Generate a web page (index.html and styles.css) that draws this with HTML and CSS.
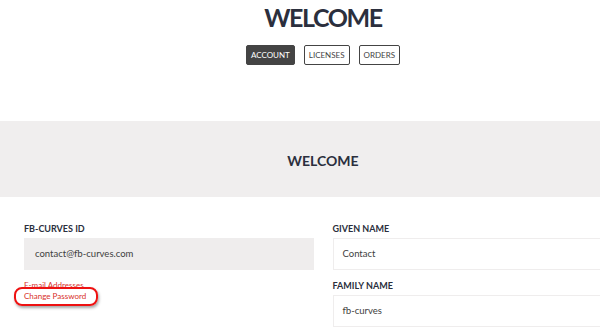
FILE: index.html
```html
<!doctype html>
<html lang="en">
<head>
  <meta charset="utf-8">
  <title>Welcome</title>
  <link rel="stylesheet" href="styles.css">
</head>
<body>
<div class="page">
  <div class="header">
    <h1>WELCOME</h1>
    <div class="tabs">
      <a href="#" class="tab tab--active">ACCOUNT</a>
      <a href="#" class="tab">LICENSES</a>
      <a href="#" class="tab">ORDERS</a>
    </div>
  </div>

  <div class="banner">
    <h2>WELCOME</h2>
  </div>

  <div class="account">
    <div class="account__col">
      <label class="field__label">FB-CURVES ID</label>
      <div class="field__input field__input--readonly">contact@fb-curves.com</div>
      <div class="links">
        <a href="#">E-mail Addresses</a>
        <a href="#" class="links__marked">Change Password</a>
      </div>
    </div>
    <div class="account__col">
      <label class="field__label">GIVEN NAME</label>
      <div class="field__input">Contact</div>
      <label class="field__label">FAMILY NAME</label>
      <div class="field__input">fb-curves</div>
    </div>
  </div>
</div>
</body>
</html>
```

FILE: styles.css
```css
body {
  margin: 0;
  overflow: hidden;
  background: #ffffff;
  font-family: "Lato", "Open Sans", Arial, sans-serif;
  color: #2b2f3d;
}

.page {
  width: 646px;
}

.header {
  display: flex;
  flex-direction: column;
  align-items: center;
  height: 121px;
}

h1 {
  margin: 0;
  padding-top: 2px;
  font-size: 25px;
  line-height: 31px;
  font-weight: 700;
  letter-spacing: -1.4px;
  color: #2b2f3d;
}

.tabs {
  display: flex;
  gap: 9px;
  margin-top: 12px;
}

.tab {
  display: block;
  height: 20px;
  line-height: 18px;
  padding: 0 4px;
  box-sizing: border-box;
  border: 1px solid #444;
  border-radius: 2px;
  font-size: 8px;
  color: #444;
  text-decoration: none;
}

.tab--active {
  background: #444;
  color: #fff;
}

.banner {
  height: 76px;
  background: #f0eeee;
  display: flex;
  align-items: center;
  justify-content: center;
}

h2 {
  margin: 0;
  padding-top: 3px;
  font-size: 14px;
  font-weight: 700;
  color: #2b2f3d;
}

.account {
  display: flex;
  gap: 19px;
  padding: 26px 24px 0;
}

.account__col {
  flex: 1;
  display: flex;
  flex-direction: column;
}

.field__label {
  font-size: 9px;
  font-weight: 700;
  line-height: 12px;
  margin-bottom: 3px;
}

.field__input {
  height: 32px;
  line-height: 30px;
  box-sizing: border-box;
  padding: 0 9px;
  border: 1px solid #efeded;
  font-size: 9.5px;
  color: #404040;
  margin-bottom: 10px;
}

.field__input--readonly {
  background: #efeded;
  padding-left: 10px;
  margin-bottom: 14px;
}

.links {
  display: flex;
  flex-direction: column;
  align-items: flex-start;
  margin-top: -4px;
}

.links a {
  font-size: 8px;
  line-height: 11px;
  color: #d8302a;
  text-decoration: none;
}

.links__marked {
  position: relative;
}

.links__marked::after {
  content: "";
  position: absolute;
  left: -10px;
  right: -12px;
  top: -4px;
  bottom: -4px;
  border: 2.5px solid #ee1111;
  border-radius: 8px;
  box-shadow: 1px 2px 3px rgba(0, 0, 0, 0.35);
}
```
